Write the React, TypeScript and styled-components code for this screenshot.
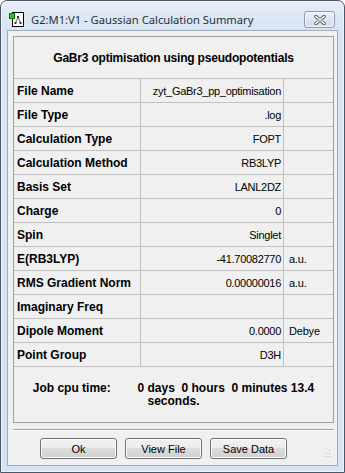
import React from "react";
import styled, { createGlobalStyle } from "styled-components";

const Global = createGlobalStyle`
  html, body { margin: 0; padding: 0; background: #ffffff; }
  body { font-family: "Liberation Sans", Arial, sans-serif; }
  * { box-sizing: border-box; }
`;

const Window = styled.div`
  width: 345px;
  height: 473px;
  border: 1px solid #4b5868;
  border-radius: 7px 7px 0 0;
  background: linear-gradient(#e6eef8 0px, #d9e5f2 24px, #d6e3f1 100%);
  box-shadow: inset 0 0 0 1px rgba(255, 255, 255, 0.55);
  display: flex;
  flex-direction: column;
  overflow: hidden;
`;

const TitleBar = styled.div`
  height: 29px;
  flex: none;
  display: flex;
  align-items: flex-start;
  padding: 0 9px 0 8px;
`;

const AppIcon = styled.svg`
  width: 16px;
  height: 16px;
  margin-top: 10px;
  flex: none;
  display: block;
`;

const TitleText = styled.div`
  margin: 11px 0 0 6px;
  font-family: "Noto Sans", "Liberation Sans", sans-serif;
  font-size: 11.2px;
  line-height: 16px;
  color: #2a2f36;
  white-space: nowrap;
  flex: 1;
`;

const CloseButton = styled.div`
  width: 31px;
  height: 17px;
  margin-top: 10px;
  border: 1px solid #8b9ab0;
  border-radius: 3px;
  background: linear-gradient(#eef3f9, #dbe5f0 55%, #d2deeb);
  box-shadow: inset 0 0 0 1px rgba(255, 255, 255, 0.7);
  display: flex;
  align-items: center;
  justify-content: center;
  flex: none;
`;

const Client = styled.div`
  margin: 0 6px 6px 6px;
  height: 436px;
  border: 1px solid #9eacbe;
  background: #f0f0f0;
  display: flex;
  flex-direction: column;
  padding: 5px 3px 0 5px;
`;

const GroupBox = styled.div`
  height: 387px;
  border: 1px solid #a0a0a0;
  display: flex;
  flex-direction: column;
  flex: none;
`;

const Heading = styled.div`
  height: 42px;
  border-bottom: 1px solid #c0c0c0;
  display: flex;
  align-items: center;
  justify-content: center;
  font-weight: bold;
  font-size: 12px;
  letter-spacing: -0.2px;
  color: #000;
`;

const Row = styled.div`
  height: 24px;
  border-bottom: 1px solid #c0c0c0;
  display: grid;
  grid-template-columns: 126px 143px 49px;
`;

const LabelCell = styled.div`
  display: flex;
  align-items: center;
  padding-left: 3px;
  font-weight: bold;
  font-size: 12px;
  color: #000;
  white-space: nowrap;
`;

const ValueCell = styled.div`
  display: flex;
  align-items: center;
  justify-content: flex-end;
  padding-right: 2px;
  border-left: 1px solid #c0c0c0;
  font-size: 11px;
  letter-spacing: -0.28px;
  color: #000;
  white-space: nowrap;
`;

const UnitCell = styled.div`
  display: flex;
  align-items: center;
  padding-left: 5px;
  border-left: 1px solid #c0c0c0;
  font-size: 11px;
  letter-spacing: -0.2px;
  color: #000;
  white-space: nowrap;
`;

const Footer = styled.div`
  flex: 1;
  display: flex;
  flex-direction: column;
  align-items: center;
  justify-content: center;
  font-weight: bold;
  font-size: 12px;
  line-height: 13px;
  color: #000;
`;

const FooterLine = styled.div`
  white-space: pre;
`;

const Separator = styled.div`
  margin-top: 6px;
  height: 2px;
  border-top: 1px solid #a0a0a0;
  border-bottom: 1px solid #ffffff;
  flex: none;
`;

const ButtonRow = styled.div`
  margin-top: 7px;
  display: flex;
  align-items: flex-end;
  gap: 8px;
  padding-left: 27px;
  height: 21px;
`;

const Button = styled.div`
  width: 77px;
  height: 21px;
  border: 1px solid #707070;
  border-radius: 3px;
  background: linear-gradient(#f2f2f2 0%, #ebebeb 50%, #dddddd 50%, #cfcfcf 100%);
  box-shadow: inset 0 0 0 1px #fbfbfb;
  display: flex;
  align-items: center;
  justify-content: center;
  font-size: 11px;
  color: #000;
`;

const Grip = styled.svg`
  width: 9px;
  height: 9px;
  margin-left: auto;
  margin-right: 3px;
  margin-bottom: 1px;
`;

const rows: [string, string, string][] = [
  ["File Name", "zyt_GaBr3_pp_optimisation", ""],
  ["File Type", ".log", ""],
  ["Calculation Type", "FOPT", ""],
  ["Calculation Method", "RB3LYP", ""],
  ["Basis Set", "LANL2DZ", ""],
  ["Charge", "0", ""],
  ["Spin", "Singlet", ""],
  ["E(RB3LYP)", "-41.70082770", "a.u."],
  ["RMS Gradient Norm", "0.00000016", "a.u."],
  ["Imaginary Freq", "", ""],
  ["Dipole Moment", "0.0000", "Debye"],
  ["Point Group", "D3H", ""],
];

export default function App() {
  return (
    <>
      <Global />
      <Window>
        <TitleBar>
          <AppIcon viewBox="0 0 16 16">
            <rect x="3.5" y="1.5" width="11" height="14" fill="#ffffff" stroke="#000000" strokeWidth="1" />
            <line x1="9" y1="6" x2="6.5" y2="12" stroke="#666666" strokeWidth="1" />
            <line x1="9" y1="6" x2="11.5" y2="12" stroke="#666666" strokeWidth="1" />
            <rect x="8" y="5" width="2" height="2" fill="#333333" />
            <rect x="5.5" y="11" width="2" height="2" fill="#333333" />
            <rect x="10.5" y="11" width="2" height="2" fill="#333333" />
            <rect x="0.5" y="2.5" width="5" height="5" fill="#1fcc1f" stroke="#0b6e0b" strokeWidth="1" />
          </AppIcon>
          <TitleText>G2:M1:V1 - Gaussian Calculation Summary</TitleText>
          <CloseButton>
            <svg width="12" height="10" viewBox="0 0 12 10">
              <path d="M2 1.5 L10 8.5 M10 1.5 L2 8.5" stroke="#5f6670" strokeWidth="3.6" strokeLinecap="round" />
              <path d="M2 1.5 L10 8.5 M10 1.5 L2 8.5" stroke="#ffffff" strokeWidth="1.6" strokeLinecap="round" />
            </svg>
          </CloseButton>
        </TitleBar>
        <Client>
          <GroupBox>
            <Heading>GaBr3 optimisation using pseudopotentials</Heading>
            {rows.map(([label, value, unit]) => (
              <Row key={label}>
                <LabelCell>{label}</LabelCell>
                <ValueCell>{value}</ValueCell>
                <UnitCell>{unit}</UnitCell>
              </Row>
            ))}
            <Footer>
              <FooterLine>{"Job cpu time:        0 days  0 hours  0 minutes 13.4"}</FooterLine>
              <FooterLine>seconds.</FooterLine>
            </Footer>
          </GroupBox>
          <Separator />
          <ButtonRow>
            <Button>Ok</Button>
            <Button>View File</Button>
            <Button>Save Data</Button>
            <Grip viewBox="0 0 9 9">
              <rect x="7" y="1" width="1" height="1" fill="#b8b8b8" />
              <rect x="4" y="4" width="1" height="1" fill="#b8b8b8" />
              <rect x="7" y="4" width="1" height="1" fill="#b8b8b8" />
              <rect x="1" y="7" width="1" height="1" fill="#b8b8b8" />
              <rect x="4" y="7" width="1" height="1" fill="#b8b8b8" />
              <rect x="7" y="7" width="1" height="1" fill="#b8b8b8" />
            </Grip>
          </ButtonRow>
        </Client>
      </Window>
    </>
  );
}
